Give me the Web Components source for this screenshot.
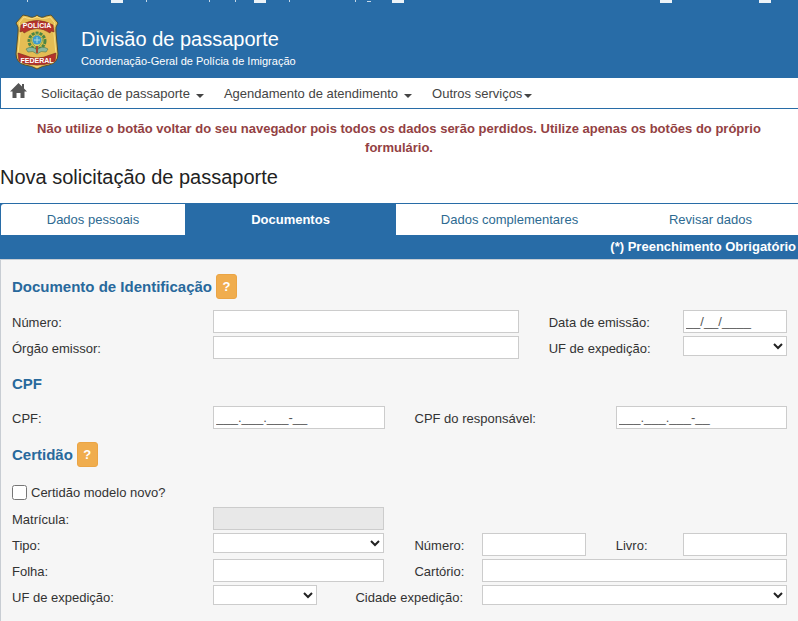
<!DOCTYPE html>
<html lang="pt-BR">
<head>
<meta charset="utf-8">
<title>Divisão de passaporte</title>
<style>
body { margin: 0; background: #fff; color: #333; font: 13px/19px "Liberation Sans", Arial, sans-serif; --blue: #286ca7; --line: #ccc; }
</style>
</head>
<body>
<passport-page></passport-page>

<script>
const define = (name, html, setup) => {
  const template = document.createElement('template');
  template.innerHTML = html;
  customElements.define(name, class extends HTMLElement {
    constructor() {
      super();
      this.attachShadow({ mode: 'open' }).append(template.content.cloneNode(true));
    }
    connectedCallback() { if (setup) setup(this, this.shadowRoot); }
  });
};

define('pf-badge', `
<style>:host { display: block; width: 44px; height: 56px; } svg { display: block; }</style>
<svg width="44" height="56" viewBox="0 0 44 56" role="img" aria-label="Polícia Federal">
  <path d="M22 1 Q26 5 31 2 L36 1 L43 9 Q40 13 41 18 L43 40 Q43 49 34 51 Q27 52 22 55 Q17 52 10 51 Q1 49 1 40 L3 18 Q4 13 1 9 L8 1 L13 2 Q18 5 22 1Z" fill="#e5bd54" stroke="#54502f" stroke-width="1"/>
  <path d="M22 3 Q27 6 32 4 L35 3 L40 9 Q37 14 39 20 L41 40 Q40 47 33 49 Q27 50 22 53 Q17 50 11 49 Q4 47 3 40 L5 20 Q7 14 4 9 L9 3 L12 4 Q17 6 22 3Z" fill="none" stroke="#f6df83" stroke-width="1"/>
  <path d="M6 11 Q22 2 38 11 L39 18 L36 17 L35 19 Q22 10 9 19 L8 17 L5 18Z" fill="#b5322b" stroke="#78291f" stroke-width=".6"/>
  <path d="M3 39 L9 41 Q22 47 35 41 L41 39 L40 47 L36 49 Q22 53 8 49 L4 47Z" fill="#b5322b" stroke="#78291f" stroke-width=".6"/>
  <circle cx="22" cy="27" r="8" fill="#e0bd48" stroke="#4b8545" stroke-width="3" stroke-dasharray="3 1"/>
  <path d="M11 35 Q17 31 22 36 Q27 31 33 35 L31 38 Q26 36 22 40 Q18 36 13 38Z" fill="#8bb79b" stroke="#477b57" stroke-width=".6"/>
  <path d="M22 19 L24 23 L28 24 L27 28 L25 31 L22 34 L19 31 L17 28 L16 24 L20 23Z" fill="#e8cf5c" stroke="#4a9256" stroke-width=".6"/>
  <circle cx="22" cy="26" r="4.5" fill="#3e9ccc"/><path d="M22 23v6M19 26h6" stroke="#a9d9df"/>
  <path d="M21 32h2v7h-2z" fill="#a64b30"/>
  <g fill="#fff" font-family="Liberation Sans, sans-serif" font-size="7" font-weight="700" text-anchor="middle"><text x="22" y="14">POLÍCIA</text><text x="22" y="49">FEDERAL</text></g>
</svg>`);

define('site-header', `
<style>
:host { display: block; background: var(--blue); color: #fff; }
.strip { display: block; width: 100%; height: 6px; }
.brand { display: flex; align-items: flex-start; gap: 22px; padding: 8px 15px; }
.titles { padding-top: 12px; }
h1 { margin: 0; font-size: 20px; line-height: 26px; font-weight: 400; }
p { margin: 0; font-size: 11px; line-height: 18px; }
</style>
<svg class="strip" viewBox="0 0 798 6" preserveAspectRatio="none" aria-hidden="true">
  <path fill="#edf3f8" d="M111 0h12v3h-12zM254 0h12v3h-12zM392 0h12v3h-12zM660 0h12v3h-12zM759 0h12v3h-12z"/>
  <path fill="#c5d8e8" d="M27 0h1v2h-1zM146 0h1v2h-1zM209 0h1v2h-1zM235 0h1v2h-1zM289 0h1v2h-1zM355 0h1v2h-1zM367 1h4v1h-4z"/>
</svg>
<div class="brand"><pf-badge></pf-badge><div class="titles"><h1>Divisão de passaporte</h1><p>Coordenação-Geral de Polícia de Imigração</p></div></div>`);

define('nav-menu', `
<style>
:host { display: block; }
button { display: flex; align-items: center; gap: 6px; padding: 2px 0 0; border: 0; background: none; color: #444; font: inherit; line-height: 28px; white-space: nowrap; }
:host([tight]) button { gap: 2px; }
i { border: 4px solid transparent; border-top-color: #444; border-bottom: 0; margin-top: 3px; }
</style>
<button type="button" aria-haspopup="true"><slot></slot><i></i></button>`);

define('site-nav', `
<style>
:host { display: block; border: 1px solid var(--blue); border-width: 0 0 1px 1px; }
nav { display: flex; align-items: center; gap: 20px; padding-left: 9px; }
a { display: block; width: 17px; height: 20px; margin-right: -6px; }
svg { display: block; }
</style>
<nav><a href="#" aria-label="Início"><svg width="17" height="17" viewBox="0 0 17 17"><path fill="#555" d="M8.500 0 L12 3.500V1h2v4.500L17 8.500H14.500V15H10.500V10H6.500V15H2.500V8.500H0Z"/></svg></a>
<nav-menu>Solicitação de passaporte</nav-menu><nav-menu>Agendamento de atendimento</nav-menu><nav-menu tight>Outros serviços</nav-menu></nav>`);

define('step-tabs', `
<style>
:host { display: block; background: var(--blue); }
nav { display: grid; grid-template-columns: 184fr 211fr 227fr 175fr; border: 1px solid var(--blue); border-width: 1px 0 0 1px; }
a { background: #fff; color: #2d6a91; text-align: center; text-decoration: none; line-height: 31px; }
a:first-child { border-top-left-radius: 3px; }
a[aria-current] { background: var(--blue); color: #fff; font-weight: 700; }
p { margin: 0; padding-right: 2px; color: #fff; font-weight: 700; line-height: 24px; text-align: right; }
</style>
<nav><a href="#">Dados pessoais</a><a href="#" aria-current="step">Documentos</a><a href="#">Dados complementares</a><a href="#">Revisar dados</a></nav>
<p>(*) Preenchimento Obrigatório</p>`);

define('form-section', `
<style>
:host { display: block; margin-bottom: 10px; }
header { display: flex; align-items: center; gap: 4px; margin-bottom: 11px; }
h3 { margin: 0; color: #28699c; font-size: 15px; line-height: 23px; }
button { width: 21px; height: 25px; padding: 0; border: 1px solid #eba545; border-radius: 3px; background: #f0ad4e; color: #fff; font: inherit; font-weight: 700; }
:host(:not([help])) button { display: none; }
.grid { display: grid; grid-template-columns: repeat(12, minmax(0, 1fr)); column-gap: 30px; }
</style>
<header><h3></h3><button type="button" aria-label="Ajuda">?</button></header>
<div class="grid"><slot></slot></div>`,
(host, root) => { root.querySelector('h3').textContent = host.getAttribute('heading'); });

/* A labelled control: "cols" sets the label's width, "span" the control's, in twelfths of the form. */
define('form-field', `
<style>
:host { display: grid; column-gap: 30px; height: 26px; }
label { line-height: 26px; white-space: nowrap; }
:host([inset]) label { padding-left: 8px; }
input, select { box-sizing: border-box; width: 100%; min-width: 0; margin: 0; border: 1px solid var(--line); border-radius: 0; background-color: #fff; color: #555; font: inherit; }
input { height: 23px; padding: 2px; }
input::placeholder { color: #555; opacity: 1; }
input:disabled { background: #e8e8e8; }
select { height: 20px; padding: 0; color: #222; }
</style>
<label for="control"></label>`,
(host, root) => {
  const cols = Number(host.getAttribute('cols'));
  const span = Number(host.getAttribute('span'));
  host.style.gridColumn = (host.getAttribute('at') || 'auto') + ' / span ' + (cols + span);
  host.style.gridTemplateColumns = 'repeat(' + (cols + span) + ', minmax(0, 1fr))';
  const label = root.querySelector('label');
  label.textContent = host.getAttribute('label');
  label.style.gridColumn = 'span ' + cols;
  const control = document.createElement(host.hasAttribute('choice') ? 'select' : 'input');
  control.id = 'control';
  control.style.gridColumn = 'span ' + span;
  if (control.localName === 'input') {
    control.type = 'text';
    control.placeholder = host.getAttribute('mask') || '';
    control.disabled = host.hasAttribute('locked');
  }
  root.append(control);
});

define('check-field', `
<style>
:host { display: block; grid-column: 1 / -1; }
label { display: flex; align-items: center; gap: 4px; height: 29px; }
input { width: 15px; height: 15px; margin: 0; }
</style>
<label><input type="checkbox"><span><slot></slot></span></label>`);

define('passport-page', `
<style>
:host { display: block; }
.warning { margin: 0; padding: 10px 15px 0; color: #934143; font-weight: 700; line-height: 19px; text-align: center; }
h2 { margin: 7px 0 13px; color: #222; font-size: 20px; line-height: 26px; font-weight: 400; }
form { padding: 14px 11px 20px 11px; border: 1px solid #c8cdd3; border-width: 1px 0 0 1px; background: #f6f6f6; }
</style>
<site-header></site-header>
<site-nav></site-nav>
<p class="warning">Não utilize o botão voltar do seu navegador pois todos os dados serão perdidos. Utilize apenas os botões do próprio formulário.</p>
<h2>Nova solicitação de passaporte</h2>
<step-tabs></step-tabs>
<form>
  <form-section heading="Documento de Identificação" help>
    <form-field label="Número:" cols="3" span="5"></form-field>
    <form-field label="Data de emissão:" cols="2" span="2" mask="__/__/____"></form-field>
    <form-field label="Órgão emissor:" cols="3" span="5"></form-field>
    <form-field label="UF de expedição:" cols="2" span="2" choice></form-field>
  </form-section>
  <form-section heading="CPF">
    <form-field label="CPF:" cols="3" span="3" mask="___.___.___-__"></form-field>
    <form-field label="CPF do responsável:" cols="3" span="3" mask="___.___.___-__"></form-field>
  </form-section>
  <form-section heading="Certidão" help>
    <check-field>Certidão modelo novo?</check-field>
    <form-field label="Matrícula:" cols="3" span="3" locked></form-field>
    <form-field label="Tipo:" at="1" cols="3" span="3" choice></form-field>
    <form-field label="Número:" cols="1" span="2"></form-field>
    <form-field label="Livro:" cols="1" span="2"></form-field>
    <form-field label="Folha:" cols="3" span="3"></form-field>
    <form-field label="Cartório:" cols="1" span="5"></form-field>
    <form-field label="UF de expedição:" cols="3" span="2" choice></form-field>
    <form-field label="Cidade expedição:" cols="2" span="5" choice inset></form-field>
  </form-section>
</form>`);
</script>
</body>
</html>
